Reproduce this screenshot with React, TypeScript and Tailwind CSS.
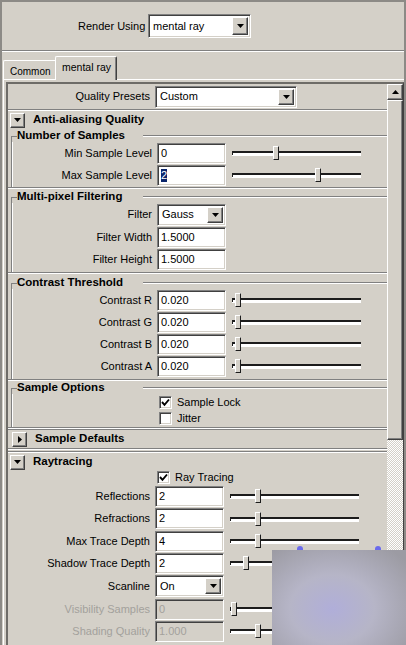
import React from "react";

const raised =
  "bg-[#d4d0c8] border border-t-white border-l-white border-r-[#404040] border-b-[#404040] shadow-[inset_-1px_-1px_0_#808080]";
const sunken =
  "border border-t-[#808080] border-l-[#808080] border-r-white border-b-white shadow-[inset_1px_1px_0_#404040,inset_-1px_-1px_0_#d4d0c8]";

function Tri({ dir = "down" }: { dir?: "down" | "up" | "right" }) {
  if (dir === "right")
    return (
      <svg width="4" height="7" viewBox="0 0 4 7">
        <polygon points="0,0 4,3.5 0,7" fill="#000" />
      </svg>
    );
  return (
    <svg width="7" height="4" viewBox="0 0 7 4">
      <polygon points={dir === "up" ? "0,4 7,4 3.5,0" : "0,0 7,0 3.5,4"} fill="#000" />
    </svg>
  );
}

function Combo({ value, className }: { value: string; className: string }) {
  return (
    <div className={`flex bg-white p-[2px] ${sunken} ${className}`}>
      <span className="flex-1 flex items-center pl-[2px] whitespace-nowrap">{value}</span>
      <div className={`w-[16px] flex items-center justify-center ${raised}`}>
        <Tri />
      </div>
    </div>
  );
}

function Slider({ pos }: { pos: number }) {
  return (
    <div className="relative w-[129px] h-[14px] ml-[6px]">
      <div className="absolute left-0 right-0 top-[5px] h-[5px] border-t-2 border-[#1c1c1c] bg-white" />
      <div className="absolute left-0 top-[5px] w-px h-[4px] bg-[#1c1c1c]" />
      <div
        className="absolute top-0 w-[6px] h-[14px] bg-[#d4d0c8] border border-t-white border-l-white border-r-[#1c1c1c] border-b-[#1c1c1c]"
        style={{ left: pos }}
      />
    </div>
  );
}

function Field({
  label,
  value,
  pos,
  ray,
  sel,
  disabled,
  tall,
}: {
  label: string;
  value: string;
  pos?: number;
  ray?: boolean;
  sel?: boolean;
  disabled?: boolean;
  tall?: boolean;
}) {
  return (
    <div className={`${tall ? "h-[23px]" : "h-[22px]"} flex items-center`}>
      <span
        className={`${ray ? "w-[142px]" : "w-[140px]"} mr-[5px] text-right whitespace-nowrap ${
          disabled ? "text-[#a3a19c]" : ""
        }`}
      >
        {label}
      </span>
      <div
        className={`w-[69px] h-[21px] flex items-center pl-[3px] ${sunken} ${
          disabled ? "bg-[#d4d0c8] text-[#a3a19c]" : "bg-white"
        }`}
      >
        {sel ? <span className="bg-[#0a246a] text-white leading-[13px]">{value}</span> : value}
      </div>
      {pos !== undefined && <Slider pos={pos} />}
    </div>
  );
}

function Check({ label, className }: { label: string; className: string }) {
  return (
    <div className={`flex items-center ${className}`}>
      <div className={`w-[13px] h-[13px] bg-white flex items-center justify-center ${sunken}`}>
        {label !== "Jitter" && (
          <svg width="9" height="9" viewBox="0 0 9 9">
            <polyline points="1,4 3.5,6.8 8,1.5" fill="none" stroke="#000" strokeWidth="1.9" />
          </svg>
        )}
      </div>
      <span className="ml-[5px]">{label}</span>
    </div>
  );
}

function Groove() {
  return <div className="h-[2px] border-t border-t-[#808080] border-b border-b-white" />;
}

function Header({ title, open = true, shift }: { title: string; open?: boolean; shift?: boolean }) {
  return (
    <div className="h-[18px] flex items-center">
      <div className={`${shift ? "ml-[4px]" : "ml-[2px]"} w-[15px] h-[15px] flex items-center justify-center ${raised}`}>
        <Tri dir={open ? "down" : "right"} />
      </div>
      <span className="ml-[8px] font-bold text-[11.5px]">{title}</span>
    </div>
  );
}

function GroupHead({ title }: { title: string }) {
  return (
    <div className="h-[13px] flex">
      <div className="ml-[3px] w-[6px] h-[6px] self-end border-t border-l border-[#808080]" />
      <span className="w-[126px] font-bold text-[11.5px] leading-[13px] whitespace-nowrap">{title}</span>
      <div className="flex-1 self-center h-[2px] border-t border-t-[#808080] border-b border-b-white" />
    </div>
  );
}

function GroupBody({ children }: { children: React.ReactNode }) {
  return (
    <div className="ml-[3px] border-l border-[#808080] shadow-[inset_1px_0_0_#fff] flex flex-col">{children}</div>
  );
}

export default function App() {
  return (
    <div className="relative w-[406px] h-[645px] overflow-hidden bg-[#d4d0c8] font-['Liberation_Sans',Arial,sans-serif] text-[11px] text-black">
      <div className="h-full border-2 border-b-0 border-[#8c8a86] flex flex-col">
        <div className="h-[48px] flex items-center pl-[76px]">
          <span className="w-[65px] mr-[5px] text-right whitespace-nowrap">Render Using</span>
          <Combo value="mental ray" className="w-[103px] h-[24px]" />
        </div>
        <Groove />

        <div className="h-[27px] flex items-end pl-px">
          <div className="h-[19px] w-[52px] pl-[6px] pt-[3px] text-[10px] whitespace-nowrap border-t border-l border-white rounded-tl-[2px]">
            Common
          </div>
          <div className="relative z-10 -mb-px h-[24px] w-[62px] pl-[6px] pt-[3px] text-[10.5px] whitespace-nowrap bg-[#d4d0c8] border-t border-l border-white border-r border-r-[#404040] shadow-[inset_-1px_0_0_#808080] rounded-t-[2px]">
            mental ray
          </div>
        </div>

        <div className="ml-px flex-1 border-t border-l border-white pl-[2px] pt-[2px]">
          <div className="flex h-full border-l-2 border-t-2 border-r border-t-[#6e6c68] border-l-[#6e6c68] border-r-[#404040]">
            <div className="w-[379px] flex flex-col">
              <div className="h-[25px] flex items-center">
                <span className="w-[142px] mr-[5px] text-right">Quality Presets</span>
                <Combo value="Custom" className="w-[142px] h-[22px]" />
              </div>
              <Groove />
              <Header title="Anti-aliasing Quality" />

              <GroupHead title="Number of Samples" />
              <GroupBody>
                <Field label="Min Sample Level" value="0" pos={41} />
                <Field label="Max Sample Level" value="2" pos={83} sel />
                <div className="h-px" />
              </GroupBody>
              <Groove />
              <div className="h-px" />

              <GroupHead title="Multi-pixel Filtering" />
              <GroupBody>
                <div className="h-[23px] flex items-center">
                  <span className="w-[140px] mr-[5px] text-right">Filter</span>
                  <Combo value="Gauss" className="w-[69px] h-[22px]" />
                </div>
                <Field label="Filter Width" value="1.5000" />
                <Field label="Filter Height" value="1.5000" />
                <div className="h-[2px]" />
              </GroupBody>
              <Groove />
              <div className="h-[2px]" />

              <GroupHead title="Contrast Threshold" />
              <GroupBody>
                <Field label="Contrast R" value="0.020" pos={3} />
                <Field label="Contrast G" value="0.020" pos={3} />
                <Field label="Contrast B" value="0.020" pos={3} />
                <Field label="Contrast A" value="0.020" pos={3} />
                <div className="h-[2px]" />
              </GroupBody>
              <Groove />

              <GroupHead title="Sample Options" />
              <GroupBody>
                <Check label="Sample Lock" className="h-[16px] ml-[147px]" />
                <Check label="Jitter" className="h-[16px] ml-[147px]" />
                <div className="h-px" />
              </GroupBody>
              <div className="h-[3px] border-t border-b border-[#808080] bg-white" />

              <Header title="Sample Defaults" open={false} shift />
              <div className="h-[5px] flex flex-col">
                <Groove />
                <div className="h-px" />
                <Groove />
              </div>

              <Header title="Raytracing" />
              <Check label="Ray Tracing" className="h-[13px] ml-[149px]" />
              <div className="h-px" />
              <Field ray label="Reflections" value="2" pos={25} />
              <Field ray tall label="Refractions" value="2" pos={25} />
              <Field ray label="Max Trace Depth" value="4" pos={25} />
              <Field ray label="Shadow Trace Depth" value="2" pos={13} />
              <div className="h-[24px] flex items-center">
                <span className="w-[142px] mr-[5px] text-right">Scanline</span>
                <Combo value="On" className="w-[69px] h-[22px]" />
              </div>
              <Field ray disabled label="Visibility Samples" value="0" pos={1} />
              <Field ray disabled label="Shading Quality" value="1.000" pos={25} />
            </div>

            <div className="w-[16px] flex flex-col">
              <div className={`h-[16px] flex items-center justify-center ${raised}`}>
                <Tri dir="up" />
              </div>
              <div className={`h-[340px] ${raised}`} />
              <div className="flex-1 bg-[image:repeating-conic-gradient(#ffffff_0_25%,#d4d0c8_0_50%)] bg-[length:2px_2px]" />
            </div>
          </div>
        </div>
      </div>

      <div className="absolute left-[297px] top-[546px] w-[6px] h-[4px] rounded-t-full bg-[#6b6bec]" />
      <div className="absolute left-[375px] top-[546px] w-[6px] h-[4px] rounded-t-full bg-[#6b6bec]" />
      <div className="absolute left-[272px] top-[550px] w-[134px] h-[95px] bg-[image:radial-gradient(ellipse_70%_80%_at_45%_62%,#b0aed9_0%,#b6b5c7_45%,#9c9ba3_100%)]" />
    </div>
  );
}
